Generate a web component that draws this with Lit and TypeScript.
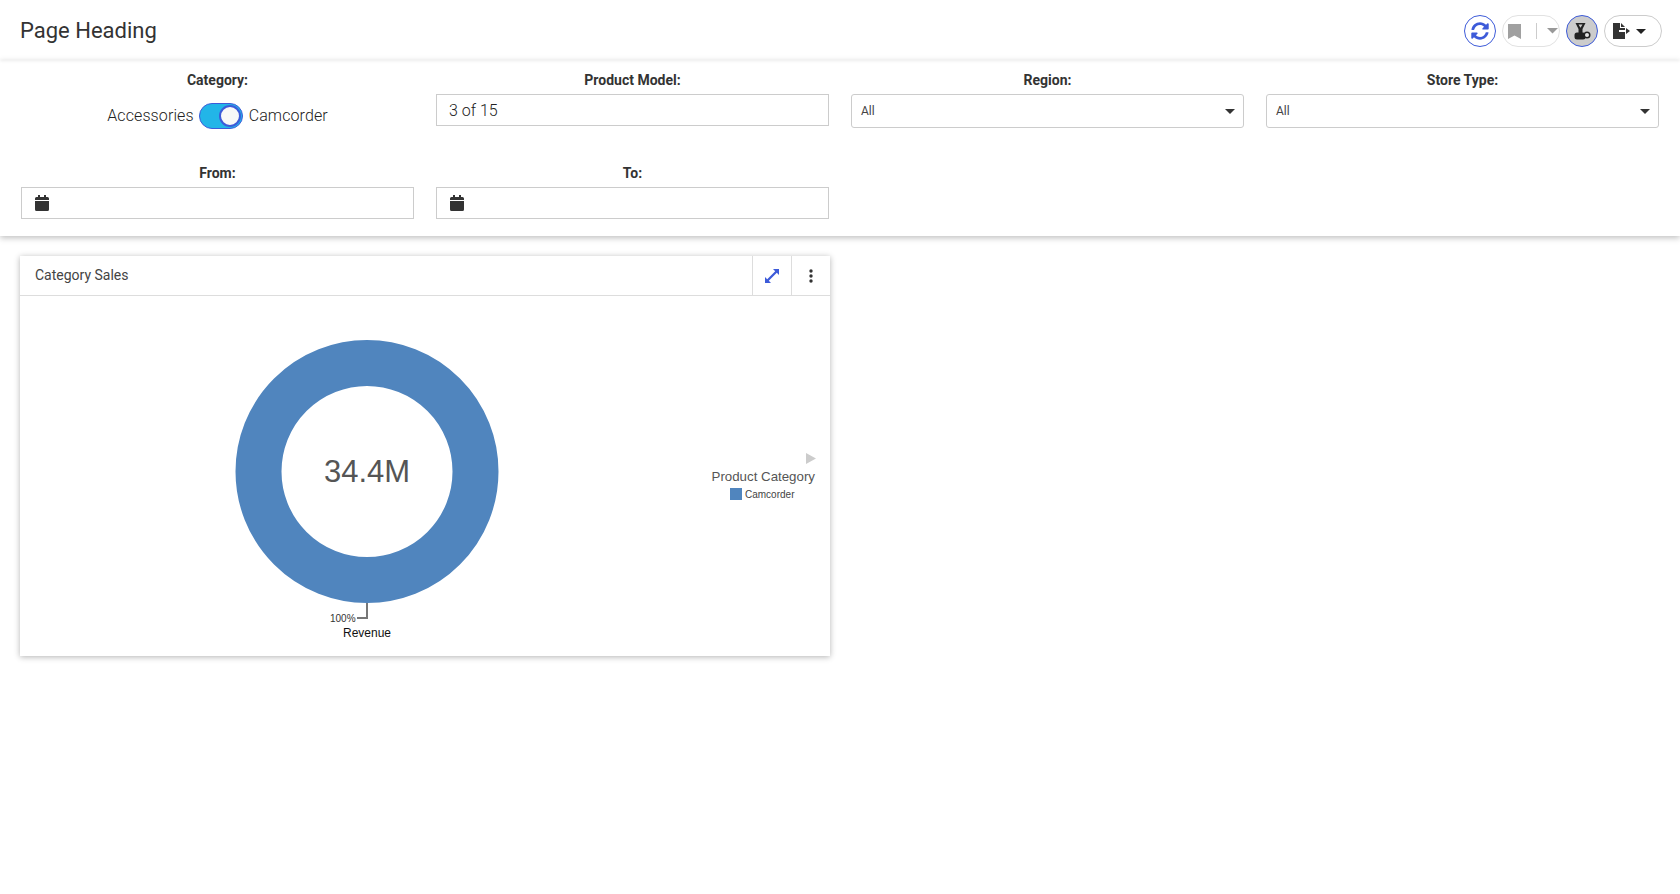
import { LitElement, html, css, svg } from 'lit';
import { customElement, property } from 'lit/decorators.js';

const caret = (size: number, color = '#333') => html`<svg width=${size} height=${size / 2} viewBox="0 0 10 5"><path d="M0 0h10L5 5z" fill=${color}></path></svg>`;

const calendar = html`<svg class="cal" width="14" height="16" viewBox="0 0 14 16">
  <path fill="#333" d="M3 0h2v2h4V0h2v2h1.500A1.500 1.500 0 0 1 14 3.500V5H0V3.500A1.500 1.500 0 0 1 1.500 2H3zM0 6h14v8.500a1.500 1.500 0 0 1-1.500 1.500h-11A1.500 1.500 0 0 1 0 14.500z"></path>
</svg>`;

@customElement('filter-field')
export class FilterField extends LitElement {
  @property({ type: String }) label = '';

  static styles = css`
    :host {
      display: flex;
      flex-direction: column;
      align-items: stretch;
      height: 93px;
    }
    .label {
      height: 34px;
      padding-top: 12px;
      box-sizing: border-box;
      font-size: 14px;
      line-height: 17px;
      font-weight: 700;
      color: #333;
      text-align: center;
    }
  `;

  render() {
    return html`<div class="label">${this.label}</div><slot></slot>`;
  }
}

@customElement('app-root')
export class AppRoot extends LitElement {
  static styles = css`
    :host {
      display: block;
      height: 894px;
      background: #fff;
      font-family: Roboto, 'Liberation Sans', sans-serif;
      color: #333;
      overflow: hidden;
    }
    .top {
      height: 60px;
      box-sizing: border-box;
      padding: 15px 18px 0 20px;
      display: flex;
      justify-content: space-between;
      align-items: flex-start;
      position: relative;
      box-shadow: 0 1px 3px rgba(0, 0, 0, 0.08);
    }
    h1 {
      margin: 0;
      font-size: 22px;
      line-height: 32px;
      font-weight: 400;
      color: #333;
    }
    .tools {
      display: flex;
      gap: 6px;
    }
    .round {
      width: 32px;
      height: 32px;
      box-sizing: border-box;
      border-radius: 50%;
      border: 1px solid #3d5bd9;
      display: flex;
      align-items: center;
      justify-content: center;
      background: #fff;
    }
    .round.on {
      background: #ccc;
    }
    .pill {
      width: 58px;
      height: 32px;
      box-sizing: border-box;
      border-radius: 16px;
      border: 1px solid #e2e2e2;
      display: flex;
      align-items: center;
      padding-left: 5px;
    }
    .pill.dark {
      border-color: #ccc;
      padding-left: 8px;
    }
    .pill .sep {
      width: 1px;
      height: 16px;
      background: #ccc;
      margin: 0 10px 0 15px;
    }
    .export {
      margin-right: 6px;
    }
    .filters {
      height: 176px;
      box-sizing: border-box;
      padding: 0 21px;
      display: grid;
      grid-template-columns: repeat(4, 393px);
      grid-auto-rows: 93px;
      column-gap: 22px;
      box-shadow: 0 2px 6px rgba(0, 0, 0, 0.25);
      position: relative;
    }
    .toggle-row {
      display: flex;
      justify-content: center;
      align-items: center;
      gap: 5px;
      font-size: 16px;
      line-height: 32px;
      font-weight: 300;
      letter-spacing: 0.1px;
      color: #222;
      margin-top: 6px;
    }
    .switch {
      width: 44px;
      height: 26px;
      box-sizing: border-box;
      border-radius: 13px;
      background: #22b5e8;
      border: 1px solid #3d5bd9;
      display: flex;
      align-items: center;
      justify-content: flex-end;
      padding-right: 1px;
      margin-right: 1px;
    }
    .knob {
      width: 22px;
      height: 22px;
      box-sizing: border-box;
      border-radius: 50%;
      background: #f8f8f8;
      border: 2px solid #3d5bd9;
    }
    .input {
      height: 32px;
      box-sizing: border-box;
      border: 1px solid #ccc;
      display: flex;
      align-items: center;
      padding-left: 12px;
      font-size: 16px;
      font-weight: 300;
      color: #222;
    }
    .input .cal {
      margin-left: 1px;
    }
    .select {
      height: 34px;
      box-sizing: border-box;
      border: 1px solid #ccc;
      border-radius: 3px;
      display: flex;
      align-items: center;
      justify-content: space-between;
      padding: 0 8px 0 9px;
      font-size: 12px;
      font-weight: 400;
      color: #444;
    }
    .board {
      padding: 20px;
    }
    .card {
      width: 810px;
      height: 400px;
      box-shadow: 0 1px 6px rgba(0, 0, 0, 0.3);
      background: #fff;
    }
    .card-head {
      height: 40px;
      box-sizing: border-box;
      border-bottom: 1px solid #ddd;
      display: flex;
      align-items: stretch;
    }
    .card-title {
      flex: 1;
      padding-left: 15px;
      font-size: 14px;
      line-height: 38px;
      color: #444;
    }
    .card-btn {
      width: 39px;
      box-sizing: border-box;
      border-left: 1px solid #ddd;
      display: flex;
      align-items: center;
      justify-content: center;
    }
    .chart {
      display: block;
    }
    .chart text {
      font-family: 'Liberation Sans', Arial, sans-serif;
    }
  `;

  private renderChart() {
    const cx = 347;
    const cy = 175.5;
    return html`<svg class="chart" width="810" height="360" viewBox="0 0 810 360">
      ${svg`
        <circle cx=${cx} cy=${cy} r="108.500" fill="none" stroke="#5085be" stroke-width="46"></circle>
        <text x=${cx} y=${cy + 10.5} text-anchor="middle" font-size="31" fill="#555">34.4M</text>
        <path d="M347 307v15h-10" fill="none" stroke="#777" stroke-width="2"></path>
        <text x="310" y="326" font-size="10" fill="#333">100%</text>
        <text x=${cx} y="341" text-anchor="middle" font-size="12" fill="#111">Revenue</text>
        <path d="M786 157l10 5.500-10 5.500z" fill="#ccc"></path>
        <text x="795" y="185" text-anchor="end" font-size="13.300" fill="#555">Product Category</text>
        <rect x="710" y="192" width="12" height="12" fill="#5085be"></rect>
        <text x="725" y="202" font-size="10" fill="#444">Camcorder</text>
      `}
    </svg>`;
  }

  render() {
    return html`
      <div class="top">
        <h1>Page Heading</h1>
        <div class="tools">
          <div class="round">
            <svg width="18" height="18" viewBox="0 0 512 512"><path fill="#3d5bd9" d="M370.720 133.280C339.458 104.008 298.888 87.962 255.848 88c-77.458.068-144.328 53.178-162.791 126.850-1.344 5.363-6.122 9.150-11.651 9.150H24.103c-7.498 0-13.194-6.807-11.807-14.176C33.933 94.924 134.813 8 256 8c66.448 0 126.791 26.136 171.315 68.685L463.030 40.970C478.149 25.851 504 36.559 504 57.941V192c0 13.255-10.745 24-24 24H345.941c-21.382 0-32.090-25.851-16.971-40.971l41.750-41.749zM32 296h134.059c21.382 0 32.090 25.851 16.971 40.971l-41.750 41.750c31.262 29.273 71.835 45.319 114.876 45.280 77.418-.07 144.315-53.144 162.787-126.849 1.344-5.363 6.122-9.150 11.651-9.150h57.304c7.498 0 13.194 6.807 11.807 14.176C478.067 417.076 377.187 504 256 504c-66.448 0-126.791-26.136-171.315-68.685L48.970 471.030C33.851 486.149 8 475.441 8 454.059V320c0-13.255 10.745-24 24-24z"></path></svg>
          </div>
          <div class="pill">
            <svg width="13" height="15" viewBox="0 0 13 15"><path fill="#a0a0a0" d="M0 0h13v15L6.500 11.500 0 15z"></path></svg>
            <span class="sep"></span>
            ${caret(11, '#999')}
          </div>
          <div class="round on">
            <svg width="17" height="17" viewBox="0 0 17 17">
              <path fill="#222" fill-rule="evenodd" d="M1.500 0h10L8.500 6v4h-4V6zM4.500 1.500l1.800 3h.4l1.800-3z"></path>
              <rect x="0.500" y="9.500" width="11" height="7" rx="2.500" fill="#222"></rect>
              <circle cx="13" cy="12" r="3.500" fill="#222"></circle>
              <circle cx="13" cy="12" r="2" fill="#e4e4e4"></circle>
            </svg>
          </div>
          <div class="pill dark">
            <svg class="export" width="17" height="16" viewBox="0 0 17 16"><path fill="#333" d="M0 0h7v5h5v2H6v2h6v7H0zM8 0l4 4H8zM13 5l4 3-4 3z"></path></svg>
            ${caret(10, '#222')}
          </div>
        </div>
      </div>

      <div class="filters">
        <filter-field label="Category:">
          <div class="toggle-row">
            <span>Accessories</span>
            <span class="switch"><span class="knob"></span></span>
            <span>Camcorder</span>
          </div>
        </filter-field>
        <filter-field label="Product Model:"><div class="input">3 of 15</div></filter-field>
        <filter-field label="Region:"><div class="select"><span>All</span>${caret(10)}</div></filter-field>
        <filter-field label="Store Type:"><div class="select"><span>All</span>${caret(10)}</div></filter-field>
        <filter-field label="From:"><div class="input">${calendar}</div></filter-field>
        <filter-field label="To:"><div class="input">${calendar}</div></filter-field>
      </div>

      <div class="board">
        <div class="card">
          <div class="card-head">
            <div class="card-title">Category Sales</div>
            <div class="card-btn">
              <svg width="16" height="16" viewBox="0 0 16 16"><path fill="#3d5bd9" d="M9 1h6v6l-2.200-2.200-8 8L7 15H1V9l2.200 2.200 8-8z"></path></svg>
            </div>
            <div class="card-btn">
              <svg width="4" height="14" viewBox="0 0 4 14"><circle cx="2" cy="2" r="1.700" fill="#333"></circle><circle cx="2" cy="7" r="1.700" fill="#333"></circle><circle cx="2" cy="12" r="1.700" fill="#333"></circle></svg>
            </div>
          </div>
          ${this.renderChart()}
        </div>
      </div>
    `;
  }
}
